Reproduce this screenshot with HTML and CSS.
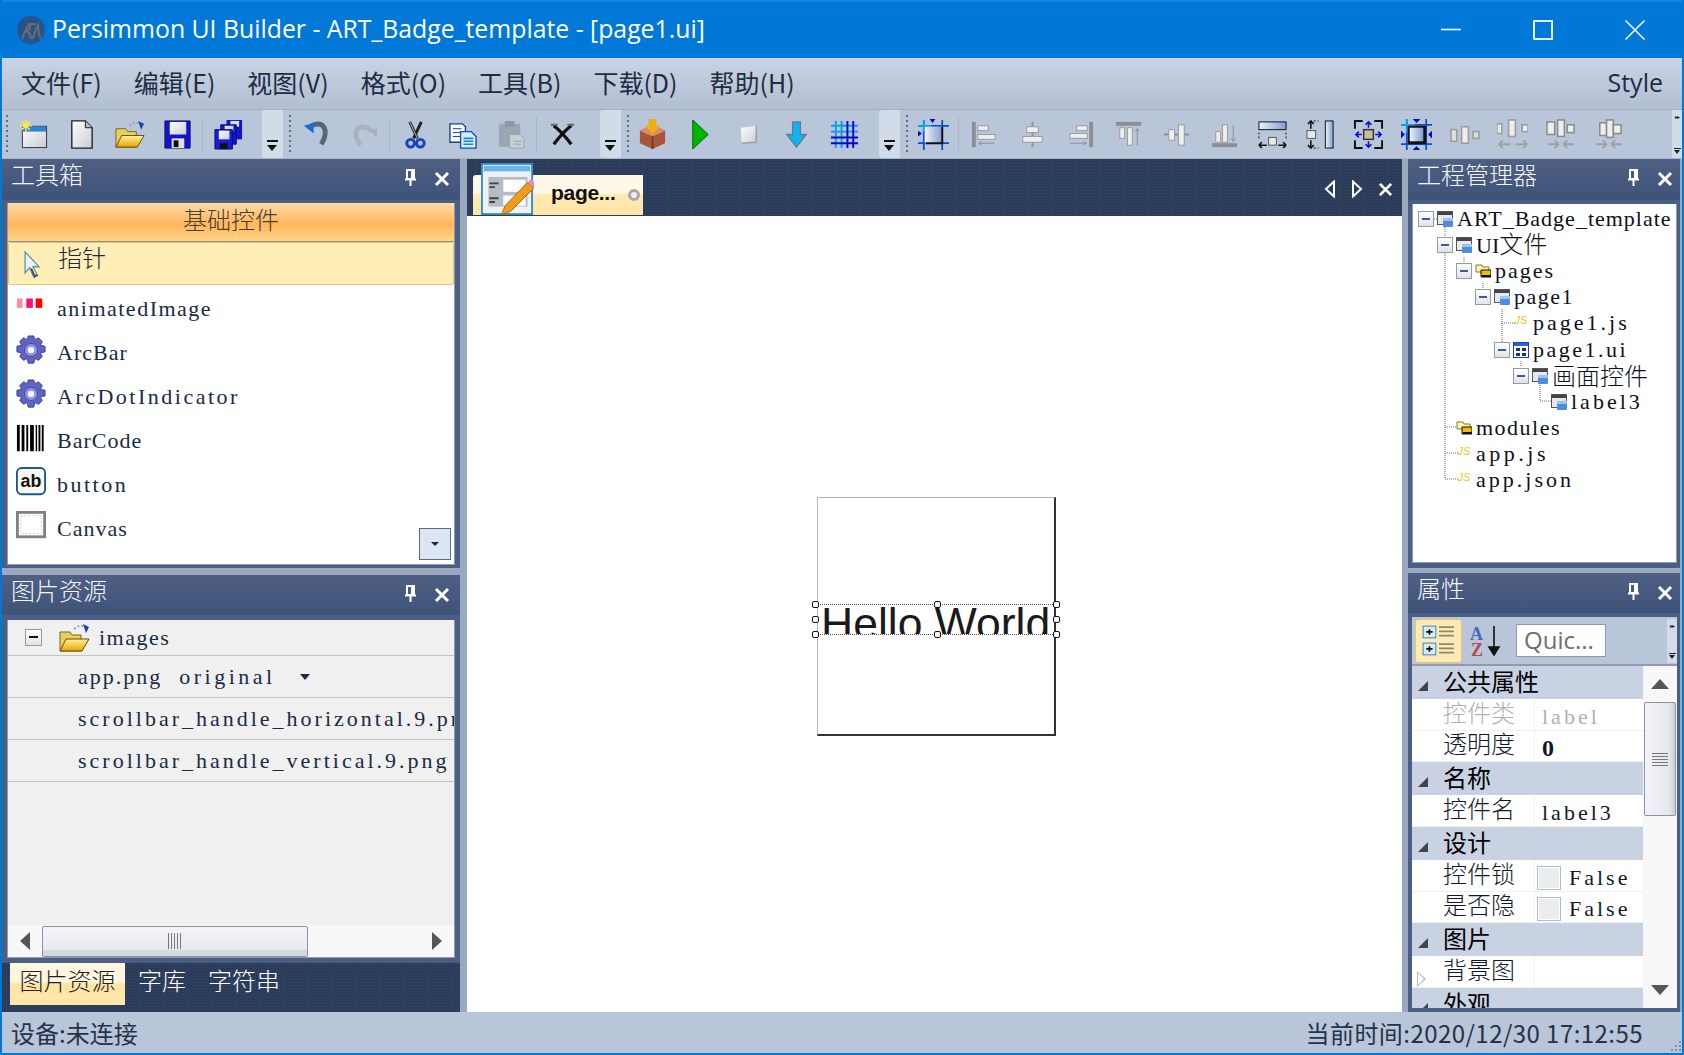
FILE: index.html
```html
<!DOCTYPE html>
<html lang="zh">
<head>
<meta charset="utf-8">
<title>Persimmon UI Builder</title>
<link rel="stylesheet" href="styles.css">
</head>
<body>
<svg class="sprite" xmlns="http://www.w3.org/2000/svg">
<defs>
<linearGradient id="gw" x1="0" y1="0" x2="1" y2="1"><stop offset="0" stop-color="#fff"/><stop offset="1" stop-color="#c8ccd4"/></linearGradient>
<linearGradient id="gb" x1="0" y1="0" x2="1" y2="0"><stop offset="0" stop-color="#eef2f8"/><stop offset="1" stop-color="#7f9fd0"/></linearGradient>
<linearGradient id="gy" x1="0" y1="0" x2="0" y2="1"><stop offset="0" stop-color="#fff3a0"/><stop offset="1" stop-color="#e8a400"/></linearGradient>
</defs>
<symbol id="i-new" viewBox="0 0 32 32"><rect x="4" y="7" width="26" height="23" fill="#333"/><rect x="5" y="8" width="24" height="21" fill="url(#gw)"/><rect x="5" y="8" width="24" height="5" fill="#2b86d8"/><path d="M8 1v12M2 7h12M4 3l8 8M12 3l-8 8" stroke="#ffe84a" stroke-width="1.6"/></symbol>
<symbol id="i-doc" viewBox="0 0 32 32"><path d="M6 2h14l7 7v21H6z" fill="url(#gw)" stroke="#222" stroke-width="1.4"/><path d="M20 2v7h7" fill="#bbb" stroke="#222"/></symbol>
<symbol id="i-open" viewBox="0 0 32 32"><path d="M2 10h10l2 3h9v16H2z" fill="#e8d060" stroke="#7a6a10"/><path d="M2 29l6-12h23l-7 12z" fill="url(#gy)" stroke="#6a4a00"/><path d="M16 7q6-5 11-2" fill="none" stroke="#8fa8c0" stroke-width="2" stroke-dasharray="2 2"/><path d="M25 2l6 3-3 6z" fill="#1c3fae"/></symbol>
<symbol id="i-save" viewBox="0 0 32 32"><path d="M3 2h26v28H3z" fill="#1414c8" stroke="#001070"/><rect x="8" y="3" width="17" height="13" fill="url(#gw)"/><rect x="10" y="20" width="13" height="10" fill="#e0e0e0"/><rect x="12" y="22" width="5" height="7" fill="#111"/></symbol>
<symbol id="i-saveall" viewBox="0 0 32 32"><path d="M14 1h16v20H14z" fill="#1414c8"/><rect x="18" y="2" width="9" height="6" fill="#ddd"/><path d="M8 6h16v20H8z" fill="#1414c8" stroke="#001070"/><rect x="12" y="7" width="9" height="6" fill="#ddd"/><path d="M2 11h18v20H2z" fill="#1c1cd8" stroke="#001070"/><rect x="6" y="12" width="11" height="9" fill="url(#gw)"/><rect x="7" y="25" width="8" height="6" fill="#111"/></symbol>
<symbol id="i-undo" viewBox="0 0 32 32"><path d="M9 8q11-6 15 1q3 7-3 17" fill="none" stroke="#55657a" stroke-width="5"/><path d="M3 7l10-3v11z" fill="#1a6fd8"/></symbol>
<symbol id="i-redo" viewBox="0 0 32 32"><path d="M23 12q-10-7-15-1q-3 7 4 16" fill="none" stroke="#a9b3ba" stroke-width="5"/><path d="M29 10l-9 1 9 8z" fill="#a6b2bb"/></symbol>
<symbol id="i-cut" viewBox="0 0 32 32"><path d="M10 3l8 17M22 3l-8 17" stroke="#222" stroke-width="3"/><path d="M10 3l8 17" stroke="#bbb" stroke-width="1"/><circle cx="11" cy="25" r="4" fill="none" stroke="#1440c8" stroke-width="3"/><circle cx="21" cy="25" r="4" fill="none" stroke="#1440c8" stroke-width="3"/></symbol>
<symbol id="i-copy" viewBox="0 0 32 32"><path d="M2 5h13l3 3v16H2z" fill="#fff" stroke="#1a3f90" stroke-width="1.4"/><path d="M5 10h9M5 14h9M5 18h9" stroke="#1a3f90"/><path d="M13 13h11l5 5v12H13z" fill="#d6ecff" stroke="#1050a8" stroke-width="1.4"/><path d="M16 20h10M16 23h10M16 26h10" stroke="#0a8adf" stroke-width="1.6"/></symbol>
<symbol id="i-paste" viewBox="0 0 32 32"><rect x="3" y="5" width="22" height="24" rx="2" fill="#9ba6b3"/><rect x="9" y="2" width="10" height="6" fill="#8d98a6"/><path d="M14 16h11l4 4v10H14z" fill="#c8ced6" stroke="#9aa3ae"/><path d="M18 23h8M18 26h8" stroke="#9aa3ae"/></symbol>
<symbol id="i-del" viewBox="0 0 32 32"><path d="M7 7q8 6 18 19" fill="none" stroke="#111" stroke-width="3.4"/><path d="M25 7q-8 6-18 19" fill="none" stroke="#111" stroke-width="3.4"/><path d="M4 6h7M21 6h7" stroke="#666" stroke-width="2"/></symbol>
<symbol id="i-box" viewBox="0 0 32 32"><path d="M3 12l13-6 13 6v13l-13 6-13-6z" fill="#a8563a"/><path d="M3 12l13 6 13-6-13-6z" fill="#de8a68"/><path d="M16 18v13" stroke="#7a3820" stroke-width="2"/><path d="M12 0h8v7h4l-8 9-8-9h4z" fill="#f0ae10"/></symbol>
<symbol id="i-play" viewBox="0 0 32 32"><path d="M8 1l16 15-16 15z" fill="#00b400" stroke="#006400"/></symbol>
<symbol id="i-stop" viewBox="0 0 32 32"><path d="M8 9l16-2v17l-15 1z" fill="url(#gw)"/><path d="M24 7v17l-15 1" fill="none" stroke="#a0a0a0" stroke-width="1.6"/></symbol>
<symbol id="i-down" viewBox="0 0 32 32"><path d="M12 3h8v13h6L16 29 6 16h6z" fill="#0fb4f0" stroke="#607d98" stroke-width="1.4"/></symbol>
<symbol id="i-grid" viewBox="0 0 32 32"><path d="M7 2v28M13 2v28" stroke="#08a0e8" stroke-width="2"/><path d="M2 7h28M2 13h28" stroke="#08a0e8" stroke-width="2"/><path d="M19 2v28M25 2v28M2 19h28M2 25h28" stroke="#0808d0" stroke-width="2"/></symbol>
<symbol id="i-snap" viewBox="0 0 32 32"><path d="M6 1v31M25 1v31M0 7h32M0 25h32" stroke="#0a4fd0" stroke-width="1.8"/><path d="M6 1v12M0 7h14" stroke="#08a8e8" stroke-width="1.8"/><rect x="7" y="8" width="18" height="17" fill="url(#gb)"/><path d="M25 8v17H8" fill="none" stroke="#111" stroke-width="2"/><path d="M12 0h6l-3 4zM0 12l4 3-4 3z" fill="#0808c0"/></symbol>
<symbol id="i-al" viewBox="0 0 32 32"><rect x="3" y="3" width="4" height="26" fill="#8a8f96"/><rect x="9" y="7" width="11" height="5" fill="#eee" stroke="#9a9a9a"/><rect x="9" y="16" width="18" height="5" fill="#eee" stroke="#9a9a9a"/><path d="M10 25h16M10 25l3-2M10 25l3 2" stroke="#8a8f96" fill="none"/></symbol>
<symbol id="i-ac" viewBox="0 0 32 32"><path d="M16 3v26" stroke="#8a8f96" stroke-width="2"/><rect x="10" y="8" width="12" height="6" fill="#eee" stroke="#9a9a9a"/><rect x="6" y="18" width="20" height="6" fill="#eee" stroke="#9a9a9a"/></symbol>
<symbol id="i-ar" viewBox="0 0 32 32"><rect x="25" y="3" width="4" height="26" fill="#8a8f96"/><rect x="12" y="7" width="11" height="5" fill="#eee" stroke="#9a9a9a"/><rect x="5" y="15" width="18" height="5" fill="#eee" stroke="#9a9a9a"/><path d="M5 25h17M22 25l-3-2M22 25l-3 2" stroke="#8a8f96" fill="none"/></symbol>
<symbol id="i-at" viewBox="0 0 32 32"><rect x="3" y="3" width="26" height="4" fill="#8a8f96"/><rect x="7" y="9" width="5" height="11" fill="#eee" stroke="#9a9a9a"/><rect x="15" y="9" width="5" height="18" fill="#eee" stroke="#9a9a9a"/><path d="M25 10v17M25 10l-2 3M25 10l2 3" stroke="#8a8f96" fill="none"/></symbol>
<symbol id="i-am" viewBox="0 0 32 32"><path d="M3 16h26" stroke="#8a8f96" stroke-width="2"/><rect x="8" y="11" width="6" height="11" fill="#eee" stroke="#9a9a9a"/><rect x="18" y="6" width="6" height="21" fill="#eee" stroke="#9a9a9a"/></symbol>
<symbol id="i-ab" viewBox="0 0 32 32"><rect x="3" y="25" width="26" height="4" fill="#8a8f96"/><rect x="7" y="13" width="5" height="11" fill="#eee" stroke="#9a9a9a"/><rect x="14" y="6" width="5" height="18" fill="#eee" stroke="#9a9a9a"/><path d="M25 7v16M25 23l-2-3M25 23l2-3" stroke="#8a8f96" fill="none"/></symbol>
<symbol id="i-sw" viewBox="0 0 32 32"><rect x="2" y="3" width="28" height="8" fill="url(#gb)" stroke="#111"/><path d="M2 14v8M30 14v8" stroke="#111" stroke-dasharray="2 2"/><rect x="12" y="19" width="8" height="8" fill="#e8e8e8" stroke="#555"/><path d="M2 27h8M2 27l3-3M2 27l3 3M22 27h8M30 27l-3-3M30 27l-3 3" stroke="#111" stroke-width="1.6" fill="none"/></symbol>
<symbol id="i-sh" viewBox="0 0 32 32"><rect x="21" y="2" width="8" height="28" fill="url(#gb)" stroke="#111"/><path d="M5 2h9M5 30h9" stroke="#111" stroke-dasharray="2 2"/><rect x="2" y="12" width="9" height="8" fill="#e8e8e8" stroke="#555"/><path d="M6 2v8M6 2l-3 3M6 2l3 3M6 22v8M6 30l-3-3M6 30l3-3" stroke="#111" stroke-width="1.6" fill="none"/></symbol>
<symbol id="i-center" viewBox="0 0 32 32"><path d="M10 2H2v8M22 2h8v8M2 22v8h8M30 22v8h-8" fill="none" stroke="#111" stroke-width="2"/><rect x="11" y="11" width="10" height="10" fill="#cbbf9f" stroke="#333" stroke-width="1.5"/><path d="M16 3v6M16 23v6M3 16h6M23 16h6M13 6l3-3 3 3M13 26l3 3 3-3M6 13l-3 3 3 3M26 13l3 3-3 3" stroke="#0c0cd0" stroke-width="1.6" fill="none"/></symbol>
<symbol id="i-fit" viewBox="0 0 32 32"><path d="M6 0v32M26 0v32M0 6h32M0 26h32" stroke="#0a4fd0" stroke-width="1.8"/><path d="M6 0v14M0 6h14" stroke="#08a8e8" stroke-width="1.8"/><rect x="7" y="7" width="19" height="19" fill="#111"/><rect x="9" y="9" width="14" height="14" fill="url(#gb)"/><path d="M12 0h8l-4 4zM12 32h8l-4-4zM0 12v8l4-4zM32 12v8l-4-4z" fill="#0808c0"/></symbol>
<symbol id="i-hs" viewBox="0 0 32 32"><rect x="2" y="11" width="6" height="12" fill="#e0e0e0" stroke="#9c9c9c" stroke-width="1.6"/><rect x="13" y="8" width="7" height="17" fill="#eee" stroke="#9c9c9c" stroke-width="1.6"/><rect x="25" y="13" width="6" height="7" fill="#ddd" stroke="#9c9c9c" stroke-width="1.6"/></symbol>
<symbol id="i-hs2" viewBox="0 0 32 32"><rect x="0" y="5" width="5" height="10" fill="#eee" stroke="#9c9c9c" stroke-width="1.6"/><rect x="12" y="1" width="7" height="17" fill="#eee" stroke="#9c9c9c" stroke-width="1.6"/><rect x="26" y="6" width="6" height="7" fill="#eee" stroke="#9c9c9c" stroke-width="1.6"/><path d="M2 26h12M2 26l4-4M2 26l4 4M19 26h12M31 26l-4-4M31 26l-4 4" stroke="#9aa2aa" stroke-width="2" fill="none"/></symbol>
<symbol id="i-hs3" viewBox="0 0 32 32"><rect x="2" y="3" width="8" height="13" fill="#eee" stroke="#8c8c8c" stroke-width="1.6"/><rect x="13" y="1" width="7" height="17" fill="#eee" stroke="#8c8c8c" stroke-width="1.6"/><rect x="23" y="6" width="7" height="8" fill="#eee" stroke="#8c8c8c" stroke-width="1.6"/><path d="M3 26h11M14 26l-4-4M14 26l-4 4M19 26h11M19 26l4-4M19 26l4 4" stroke="#9aa2aa" stroke-width="2" fill="none"/></symbol>
<symbol id="i-hs4" viewBox="0 0 32 32"><rect x="7" y="4" width="7" height="13" fill="#eee" stroke="#8c8c8c" stroke-width="1.6"/><rect x="14" y="1" width="7" height="18" fill="#eee" stroke="#8c8c8c" stroke-width="1.6"/><rect x="21" y="6" width="8" height="9" fill="#eee" stroke="#8c8c8c" stroke-width="1.6"/><path d="M3 26h11M14 26l-4-4M14 26l-4 4M19 26h11M19 26l4-4M19 26l4 4" stroke="#9aa2aa" stroke-width="2" fill="none"/></symbol>
<symbol id="i-pin" viewBox="0 0 12 18"><path d="M3 1h7v9H3zM1 10.500h11M6.500 10v7" fill="none" stroke="#fff" stroke-width="2"/><path d="M8 1v9" stroke="#fff" stroke-width="2"/></symbol>
<symbol id="i-x" viewBox="0 0 16 16"><path d="M2 2l12 12M14 2L2 14" stroke="#fff" stroke-width="3"/></symbol>
<symbol id="i-gear" viewBox="0 0 32 32"><path d="M13 1h6l1 4 4-2 4 4-2 4 5 1v6l-5 1 2 4-4 4-4-2-1 5h-6l-1-5-4 2-4-4 2-4-5-1v-6l5-1-2-4 4-4 4 2z" fill="#5f63c4" stroke="#3c3f96"/><circle cx="16" cy="16" r="7" fill="#8d92e0" stroke="#44479c"/><circle cx="16" cy="16" r="3.500" fill="#f4f4ff"/></symbol>
<symbol id="i-win" viewBox="0 0 16 16"><rect x=".5" y=".5" width="15" height="13" fill="#e6e8ec" stroke="#555"/><rect x="1" y="1" width="14" height="3" fill="#444"/><rect x="6" y="7" width="10" height="9" rx="1" fill="#4f8edc"/><rect x="6" y="7" width="10" height="3" fill="#9cc4f0"/></symbol>
<symbol id="i-fold" viewBox="0 0 16 14"><path d="M1 1h6l1 2h6v5H1z" fill="#fff3b0" stroke="#8a7a30"/><path d="M6 6h10v7H6z" fill="#f0bd10" stroke="#111"/><path d="M7 12h9" stroke="#111" stroke-width="2"/></symbol>
<symbol id="i-grid16" viewBox="0 0 16 16"><rect x=".5" y=".5" width="15" height="15" fill="#fff" stroke="#1a3fb0"/><rect x="1" y="1" width="14" height="3" fill="#2f5fe0"/><path d="M3 6h4v3H3zM9 6h4v3H9zM3 11h4v3H3zM9 11h4v3H9z" fill="#16366e"/></symbol>
</svg>

<div class="app">
  <header class="titlebar">
    <svg class="logo" viewBox="0 0 28 30"><circle cx="14" cy="15" r="14" fill="#23548f"/><path d="M5 24q4-10 7-15h7M13 9q1 6-3 7 3 2 4 8M16 24q2-9 5-14 0 8 3 14" fill="none" stroke="#6f6a62" stroke-width="2.200"/></svg>
    <div class="titletext">Persimmon UI Builder - ART_Badge_template - [page1.ui]</div>
    <div class="winctl">
      <svg class="wc" viewBox="0 0 20 20"><path d="M0 9.500h20" stroke="#fff" stroke-width="1.600"/></svg>
      <svg class="wc" viewBox="0 0 20 20"><rect x="1" y="1" width="18" height="18" fill="none" stroke="#fff" stroke-width="1.800"/></svg>
      <svg class="wc" viewBox="0 0 20 20"><path d="M.5.5l19 19M19.500.5l-19 19" stroke="#fff" stroke-width="1.500"/></svg>
    </div>
  </header>

  <nav class="menubar">
    <span>文件(F)</span><span>编辑(E)</span><span>视图(V)</span><span>格式(O)</span><span>工具(B)</span><span>下载(D)</span><span>帮助(H)</span>
    <span class="menu-right">Style</span>
  </nav>

  <div class="toolbar">
    <div class="tgroup g1">
      <i class="grip"></i>
      <b class="tb"><svg><use href="#i-new"/></svg></b>
      <b class="tb"><svg><use href="#i-doc"/></svg></b>
      <b class="tb"><svg><use href="#i-open"/></svg></b>
      <b class="tb"><svg><use href="#i-save"/></svg></b>
      <i class="tsep"></i>
      <b class="tb"><svg><use href="#i-saveall"/></svg></b>
      <span class="chev"><i></i></span>
    </div>
    <div class="tgroup g2">
      <i class="grip"></i>
      <b class="tb"><svg><use href="#i-undo"/></svg></b>
      <b class="tb"><svg><use href="#i-redo"/></svg></b>
      <i class="tsep"></i>
      <b class="tb"><svg><use href="#i-cut"/></svg></b>
      <b class="tb"><svg><use href="#i-copy"/></svg></b>
      <b class="tb"><svg><use href="#i-paste"/></svg></b>
      <i class="tsep"></i>
      <b class="tb"><svg><use href="#i-del"/></svg></b>
      <span class="chev"><i></i></span>
    </div>
    <div class="tgroup g3">
      <i class="grip"></i>
      <b class="tb"><svg><use href="#i-box"/></svg></b>
      <b class="tb"><svg><use href="#i-play"/></svg></b>
      <b class="tb"><svg><use href="#i-stop"/></svg></b>
      <b class="tb"><svg><use href="#i-down"/></svg></b>
      <b class="tb"><svg><use href="#i-grid"/></svg></b>
      <span class="chev"><i></i></span>
    </div>
    <div class="tgroup g4">
      <i class="grip"></i>
      <b class="tb"><svg><use href="#i-snap"/></svg></b>
      <i class="tsep"></i>
      <b class="tb"><svg><use href="#i-al"/></svg></b>
      <b class="tb"><svg><use href="#i-ac"/></svg></b>
      <b class="tb"><svg><use href="#i-ar"/></svg></b>
      <b class="tb"><svg><use href="#i-at"/></svg></b>
      <b class="tb"><svg><use href="#i-am"/></svg></b>
      <b class="tb"><svg><use href="#i-ab"/></svg></b>
      <b class="tb"><svg><use href="#i-sw"/></svg></b>
      <b class="tb"><svg><use href="#i-sh"/></svg></b>
      <b class="tb"><svg><use href="#i-center"/></svg></b>
      <b class="tb"><svg><use href="#i-fit"/></svg></b>
      <b class="tb"><svg><use href="#i-hs"/></svg></b>
      <b class="tb"><svg><use href="#i-hs2"/></svg></b>
      <b class="tb"><svg><use href="#i-hs3"/></svg></b>
      <b class="tb"><svg><use href="#i-hs4"/></svg></b>
      <span class="over"><em>▸▸</em><i></i></span>
    </div>
  </div>

  <main class="main">
    <section class="col col-left">
      <div class="panel p-toolbox">
        <div class="phead"><span>工具箱</span><svg class="pin"><use href="#i-pin"/></svg><svg class="px"><use href="#i-x"/></svg></div>
        <div class="toolbox">
          <div class="tbgroup">基础控件</div>
          <div class="tool selected">
            <svg class="tool-ic" viewBox="0 0 32 32"><path d="M7 1l16 17h-7l5 10-4 2-5-11-5 6z" fill="#eef0ff" stroke="#5a9a9a" stroke-width="1.500"/><path d="M14 20l4 9 3-2" fill="none" stroke="#444" stroke-width="2"/></svg>
            <span class="cjk">指针</span>
          </div>
          <div class="tool">
            <svg class="tool-ic" viewBox="0 0 32 32"><rect x="1" y="8" width="6" height="10" fill="#ff8f9f"/><rect x="11" y="8" width="7" height="10" fill="#ff0f70"/><rect x="21" y="8" width="7" height="10" fill="#ff0000"/></svg>
            <span class="tr-15">animatedImage</span>
          </div>
          <div class="tool"><svg class="tool-ic"><use href="#i-gear"/></svg><span class="tr-10">ArcBar</span></div>
          <div class="tool"><svg class="tool-ic"><use href="#i-gear"/></svg><span class="tr-25">ArcDotIndicator</span></div>
          <div class="tool">
            <svg class="tool-ic" viewBox="0 0 32 32"><path d="M1 2h3v28H1zM6 2h3v28H6zM11 2h2v28h-2zM15 2h4v28h-4zM21 2h1.500v28H21zM24 2h2v28h-2zM27.500 2h2v28h-2z" fill="#000"/></svg>
            <span class="tr-10">BarCode</span>
          </div>
          <div class="tool">
            <svg class="tool-ic" viewBox="0 0 32 32"><rect x="1" y="1" width="30" height="28" rx="5" fill="#f8f8f0" stroke="#1a5a8a" stroke-width="2"/><text class="ab-text" x="16" y="21" text-anchor="middle">ab</text></svg>
            <span class="tr-25">button</span>
          </div>
          <div class="tool">
            <svg class="tool-ic" viewBox="0 0 32 32"><rect x="1.500" y="1.500" width="29" height="26" fill="#fff" stroke="#808080" stroke-width="3"/><rect x="5" y="5" width="22" height="19" fill="none" stroke="#ccc" stroke-dasharray="2 2"/></svg>
            <span class="tr-10">Canvas</span>
          </div>
          <div class="tool tool-clip">
            <svg class="tool-ic" viewBox="0 0 32 32"><rect x="1" y="1" width="30" height="27" rx="2" fill="#dfe8f4"/><rect x="4" y="5" width="24" height="5" fill="#5d9cf0"/></svg>
          </div>
          <button class="tbdrop"><i></i></button>
        </div>
      </div>
      <div class="panel p-images">
        <div class="phead"><span>图片资源</span><svg class="pin"><use href="#i-pin"/></svg><svg class="px"><use href="#i-x"/></svg></div>
        <div class="imagelist">
          <div class="imgrows">
            <div class="imgrow head"><span class="expander big"></span><svg class="folder"><use href="#i-open"/></svg><span class="tr-15">images</span></div>
            <div class="imgrow"><span class="tr-20">app.png</span><span class="orig tr-35">original</span><i class="caret"></i></div>
            <div class="imgrow"><span class="tr-30">scrollbar_handle_horizontal.9.png</span></div>
            <div class="imgrow"><span class="tr-30">scrollbar_handle_vertical.9.png</span></div>
          </div>
          <div class="hscroll">
            <i class="arr-l"></i>
            <div class="hthumb"><i></i></div>
            <i class="arr-r"></i>
          </div>
        </div>
        <div class="btabs">
          <span class="btab active">图片资源</span><span class="btab">字库</span><span class="btab">字符串</span>
        </div>
      </div>
    </section>

    <section class="center">
      <div class="tabstrip">
        <div class="doctab">
          <svg class="docicon" viewBox="0 0 56 56"><rect x="1" y="1" width="54" height="54" fill="#eef2f6" stroke="#2c8ec4" stroke-width="2"/><rect x="3" y="3" width="50" height="6" fill="#6ab4e8"/><rect x="8" y="15" width="42" height="32" fill="#b4bcc4"/><rect x="24" y="18" width="24" height="13" fill="#fff"/><rect x="24" y="35" width="24" height="11" fill="#fff"/><path d="M9 22h10M9 26h6M9 38h10M9 42h6" stroke="#444" stroke-width="2"/><path d="M22 56l4-10 24-25 7 6-25 25z" fill="#f09a20" stroke="#a06010"/><path d="M50 21l4-4 6 6-3 4z" fill="#e090c0"/></svg>
          <span class="doctitle">page...</span>
          <i class="tabclose"></i>
        </div>
        <div class="tabctl">
          <svg viewBox="0 0 12 18"><path d="M10 1.500v15L2 9z" fill="none" stroke="#fff" stroke-width="2"/></svg>
          <svg viewBox="0 0 12 18"><path d="M2 1.500v15L10 9z" fill="none" stroke="#fff" stroke-width="2"/></svg>
          <svg class="tabx"><use href="#i-x"/></svg>
        </div>
      </div>
      <div class="canvas">
        <div class="design">
          <div class="label">
            <span class="hellotext">Hello World</span>
            <i class="h h-tl"></i><i class="h h-tc"></i><i class="h h-tr"></i>
            <i class="h h-ml"></i><i class="h h-mr"></i>
            <i class="h h-bl"></i><i class="h h-bc"></i><i class="h h-br"></i>
          </div>
        </div>
      </div>
    </section>

    <section class="col col-right">
      <div class="panel p-project">
        <div class="phead"><span>工程管理器</span><svg class="pin"><use href="#i-pin"/></svg><svg class="px"><use href="#i-x"/></svg></div>
        <div class="tree">
          <svg class="treelines"><path d="M32 23v10M32 49v226M32 223h11M32 249h14M32 275h14M51 53v7M70 79v5M89 105v35M89 119h14M108 157v5M127 179v18M127 197h11M21 15h3"/></svg>
          <div class="node d0"><span class="expander"></span><svg class="n-ic"><use href="#i-win"/></svg><span class="tr-10">ART_Badge_template</span></div>
          <div class="node d1"><span class="expander"></span><svg class="n-ic"><use href="#i-win"/></svg><span class="lift">UI<span class="cjk">文件</span></span></div>
          <div class="node d2"><span class="expander"></span><svg class="n-ic"><use href="#i-fold"/></svg><span class="tr-20">pages</span></div>
          <div class="node d3"><span class="expander"></span><svg class="n-ic"><use href="#i-win"/></svg><span class="tr-15">page1</span></div>
          <div class="node d4"><span class="nospace"></span><span class="js">JS</span><span class="tr-30">page1.js</span></div>
          <div class="node d4"><span class="expander"></span><svg class="n-ic"><use href="#i-grid16"/></svg><span class="tr-25">page1.ui</span></div>
          <div class="node d5"><span class="expander"></span><svg class="n-ic"><use href="#i-win"/></svg><span class="cjk lift">画面控件</span></div>
          <div class="node d6"><span class="nospace"></span><svg class="n-ic"><use href="#i-win"/></svg><span class="tr-30">label3</span></div>
          <div class="node d1"><span class="nospace"></span><svg class="n-ic"><use href="#i-fold"/></svg><span class="tr-15">modules</span></div>
          <div class="node d1"><span class="nospace"></span><span class="js">JS</span><span class="tr-35">app.js</span></div>
          <div class="node d1"><span class="nospace"></span><span class="js">JS</span><span class="tr-30">app.json</span></div>
        </div>
      </div>
      <div class="panel p-props">
        <div class="phead"><span>属性</span><svg class="pin"><use href="#i-pin"/></svg><svg class="px"><use href="#i-x"/></svg></div>
        <div class="ptools">
          <span class="pbtn">
            <svg viewBox="0 0 32 32"><rect x="1" y="2" width="12" height="11" fill="#d8ecf8" stroke="#4a88b8"/><rect x="1" y="18" width="12" height="11" fill="#d8ecf8" stroke="#4a88b8"/><path d="M4 7.500h6M7 5v5M4 23.500h6M7 21v5" stroke="#111" stroke-width="1.600"/><path d="M16 3h14M16 7h14M16 11h14M16 19h14M16 23h14M16 27h14" stroke="#8a8a70" stroke-width="1.600"/></svg>
          </span>
          <svg class="azicon" viewBox="0 0 32 32"><text class="az a" x="0" y="15">A</text><text class="az z" x="1" y="31">Z</text><path d="M24 1v26M19 22l5 8 5-8z" stroke="#111" stroke-width="1.600" fill="#111"/></svg>
          <span class="quick">Quic...</span>
          <span class="over small"><em>▸▸</em><i></i></span>
        </div>
        <div class="props">
          <div class="pgrid">
            <div class="cat"><i class="tri"></i><span>公共属性</span></div>
            <div class="prow disabled"><span class="pname">控件类</span><span class="pval tr-30">label</span></div>
            <div class="prow"><span class="pname">透明度</span><span class="pval strong">0</span></div>
            <div class="cat"><i class="tri"></i><span>名称</span></div>
            <div class="prow"><span class="pname">控件名</span><span class="pval tr-30">label3</span></div>
            <div class="cat"><i class="tri"></i><span>设计</span></div>
            <div class="prow"><span class="pname">控件锁</span><span class="pval tr-30"><i class="chk"></i>False</span></div>
            <div class="prow"><span class="pname">是否隐</span><span class="pval tr-30"><i class="chk"></i>False</span></div>
            <div class="cat"><i class="tri"></i><span>图片</span></div>
            <div class="prow"><i class="tri-open"></i><span class="pname">背景图</span><span class="pval"></span></div>
            <div class="cat last"><i class="tri"></i><span>外观</span></div>
          </div>
          <div class="vscroll">
            <i class="up"></i>
            <div class="vthumb"><i></i></div>
            <i class="dn"></i>
          </div>
        </div>
      </div>
    </section>
  </main>

  <footer class="status">
    <span>设备:未连接</span>
    <span class="time">当前时间:2020/12/30 17:12:55</span>
    <svg class="resize" viewBox="0 0 12 12"><path d="M9 1h2v2H9zM5 5h2v2H5zM9 5h2v2H9zM1 9h2v2H1zM5 9h2v2H5zM9 9h2v2H9z" fill="#7f8da5"/></svg>
  </footer>
</div>
</body>
</html>
```

FILE: styles.css
```css
* { box-sizing: border-box; }
html, body { margin: 0; padding: 0; }
body { width: 1684px; height: 1055px; overflow: hidden; background: #0078d7; font-family: "Noto Sans CJK SC", "Noto Sans", sans-serif; }
.sprite { position: absolute; width: 0; height: 0; overflow: hidden; }
.app { width: 1684px; height: 1055px; border: 2px solid #0078d7; border-top: 0; display: flex; flex-direction: column; }

/* tracking classes: the widely spaced latin of the reference */
.tr-10 { letter-spacing: 1px; }
.tr-15 { letter-spacing: 1.5px; }
.tr-20 { letter-spacing: 2px; }
.tr-25 { letter-spacing: 2.5px; }
.tr-30 { letter-spacing: 3px; }
.tr-35 { letter-spacing: 3.5px; }

/* title */
.titlebar { flex: 0 0 58px; background: #0078d7; display: flex; align-items: center; color: #fff; border-top: 2px solid #1685dd; }
.logo { width: 28px; height: 30px; margin-left: 15px; }
.titletext { font-family: "Open Sans", "Noto Sans", sans-serif; font-size: 24.8px; margin-left: 7px; white-space: nowrap; position: relative; top: -2px; }
.winctl { margin-left: auto; display: flex; align-items: center; gap: 72px; margin-right: 37px; }
.wc { width: 20px; height: 20px; display: block; }

/* menu */
.menubar { flex: 0 0 52px; background: linear-gradient(#c9d3e3, #b2bed2); display: flex; align-items: center; gap: 32px; padding: 0 19px 0 19px; font-size: 25px; line-height: 1; color: #1e2c44; white-space: nowrap; border-bottom: 1px solid #a3b0c6; }
.menubar span { position: relative; top: -1px; }
.menubar .menu-right { margin-left: auto; font-family: "Open Sans", sans-serif; font-size: 25px; }

/* toolbar */
.toolbar { flex: 0 0 49px; background: #b9c5d8; display: flex; gap: 4px; padding-left: 2px; border-bottom: 1px solid #a8b5ca; }
.tgroup { display: flex; align-items: center; height: 48px; position: relative; background: #b9c5d8; }
.g1 { flex: 0 0 279px; }
.g2 { flex: 0 0 334px; }
.g3 { flex: 0 0 275px; }
.g4 { flex: 1; }
.grip { width: 2px; height: 38px; margin: 0 1px 0 2px; flex: none; background: repeating-linear-gradient(#5e6c84 0 2px, transparent 2px 5px); }
.g3 .grip { margin-right: 0; }
.g3 .tb:first-of-type { margin-left: -1px; }
.tb { width: 48px; height: 48px; flex: none; display: flex; align-items: center; justify-content: center; }
.tb svg { width: 31px; height: 31px; display: block; }
.tsep { width: 1px; height: 34px; margin: 0 1px; background: #a9b6ca; flex: none; }
.chev { margin-left: auto; width: 21px; height: 48px; background: #d2dbe8; border-radius: 3px 0 0 3px; display: flex; align-items: flex-end; justify-content: center; padding-bottom: 8px; flex: none; position: relative; }
.chev i { display: block; width: 11px; height: 10px; border-top: 2px solid #111; position: relative; }
.chev i::after { content: ""; position: absolute; left: 0; top: 3px; border: 5.5px solid transparent; border-top: 6px solid #111; border-bottom: 0; }
.over { margin-left: auto; width: 10px; height: 48px; background: #d2dbe8; display: flex; flex-direction: column; align-items: center; justify-content: space-between; padding: 3px 0 4px; flex: none; }
.over em { font-style: normal; font-size: 6px; line-height: 8px; color: #222; letter-spacing: -1px; }
.over i { display: block; width: 7px; height: 6px; border-top: 1px solid #222; position: relative; }
.over i::after { content: ""; position: absolute; left: 0; top: 1px; border: 3.5px solid transparent; border-top: 4px solid #222; border-bottom: 0; }

/* main */
.main { flex: 1; display: flex; background: #9aa9c0; min-height: 0; padding-right: 2px; }
.col { display: flex; flex-direction: column; flex: none; min-height: 0; }
.col-left { width: 458px; }
.col-right { width: 272px; margin-left: 6px; }
.panel { background: #4b5e83; display: flex; flex-direction: column; padding: 0 5px; min-height: 0; }
.p-toolbox { flex: 0 0 409px; padding-bottom: 3px; }
.p-images { flex: 1; margin-top: 7px; padding: 0; }
.p-project { flex: 0 0 409px; padding-bottom: 5px; }
.p-props { flex: 1; margin-top: 5px; padding-bottom: 4px; }
.phead { flex: 0 0 41px; margin: 0 -5px 3px; padding: 0 10px 11px 9px; background: linear-gradient(#4e6083, #3f5279); color: #f4f6fa; font-size: 24px; font-weight: 300; display: flex; align-items: center; line-height: 1; }
.p-images .phead { margin: 0 0 5px; flex-basis: 40px; }
.p-props .phead { margin-bottom: 4px; flex-basis: 40px; }
.p-project .phead { margin-bottom: 4px; }
.col-right .phead { padding-right: 7px; }
.phead span { flex: 1; }
.pin { width: 12px; height: 18px; margin: 8px 18px 0 0; }
.px { width: 16px; height: 16px; margin-top: 10px; }

/* toolbox */
.toolbox { flex: 1; min-height: 0; background: #fff; position: relative; overflow: hidden; font-family: "Liberation Serif", "Noto Sans CJK SC", serif; font-size: 22px; color: #1a2a44; border: 1px solid #8f9bb0; border-top: 0; }
.tbgroup { height: 39px; padding-bottom: 7px; background: linear-gradient(#ffdba8, #ffb65c 55%, #ffd488); border-bottom: 1px solid #8f8f8f; display: flex; align-items: center; justify-content: center; font-family: "Noto Sans CJK SC", sans-serif; font-size: 24px; font-weight: 300; line-height: 1; color: #4c4030; }
.tool { height: 44px; display: flex; align-items: center; padding-left: 8px; gap: 11px; white-space: nowrap; flex: none; }
.tool.selected { height: 43px; margin-bottom: 1px; background: #ffeeb5; border: 1px solid #e6c676; border-radius: 2px; padding-left: 8px; font-family: "Noto Sans CJK SC", sans-serif; padding-bottom: 15px; gap: 11px; line-height: 1; }
.tool span { position: relative; top: 1px; }
.tool-ic { width: 30px; height: 30px; flex: none; position: relative; top: -2px; }
.tool.selected .tool-ic { margin-left: 2px; top: 9px; width: 28px; }
.tool-clip { align-items: flex-start; padding-top: 13px; }
.tool-clip .tool-ic { top: 0; }
.cjk { font-family: "Noto Sans CJK SC", sans-serif; font-size: 24px; font-weight: 300; }
.ab-text { font: 700 19px "Liberation Sans", sans-serif; fill: #111; }
.tbdrop { position: absolute; right: 3px; bottom: 4px; width: 32px; height: 32px; padding: 0; background: #dce6f3; border: 1px solid #5d6c85; display: flex; align-items: center; justify-content: center; }
.tbdrop i { width: 0; height: 0; border: 4px solid transparent; border-top: 4px solid #1a2a44; border-bottom: 0; display: block; }

/* images */
.imagelist { flex: 0 0 338px; margin: 0 5px; background: #f0f0f0; display: flex; flex-direction: column; overflow: hidden; font-family: "Liberation Serif", serif; font-size: 22px; color: #1a2a44; border: 1px solid #8f9bb0; border-top: 0; }
.imgrows { flex: 1; min-height: 0; }
.imgrow { height: 42px; border-bottom: 1px solid #c4c4c4; display: flex; align-items: center; padding-left: 70px; white-space: nowrap; overflow: hidden; }
.imgrow.head { height: 36px; padding-left: 17px; }
.expander { width: 16px; height: 16px; border: 1px solid #9a9a9a; background: linear-gradient(#fff, #dfe3ea); position: relative; flex: none; display: block; }
.expander::after { content: ""; position: absolute; left: 3px; right: 3px; top: 6px; height: 2px; background: #3d5aa0; }
.expander.big { width: 17px; height: 17px; }
.expander.big::after { background: #111; }
.folder { width: 32px; height: 32px; margin: 0 9px 0 16px; flex: none; }
.orig { margin-left: 17px; }
.caret { width: 0; height: 0; border: 5.5px solid transparent; border-top: 6px solid #1a2a44; border-bottom: 0; margin-left: 24px; }
.hscroll { flex: 0 0 32px; background: #f8f8f8; display: flex; align-items: center; padding: 0 12px; }
.arr-l { width: 0; height: 0; border: 9px solid transparent; border-right: 10px solid #555; border-left: 0; flex: none; }
.arr-r { width: 0; height: 0; border: 9px solid transparent; border-left: 10px solid #555; border-right: 0; flex: none; margin-left: auto; }
.hthumb { width: 266px; height: 31px; margin-left: 12px; background: linear-gradient(#f2f4f8, #e6e9ef 80%, #d5d9e0 80%); border: 1px solid #8a93a6; border-radius: 2px; display: flex; align-items: center; justify-content: center; }
.hthumb i { width: 15px; height: 16px; display: block; background: repeating-linear-gradient(90deg, #777 0 1px, transparent 1px 3px); }
.btabs { flex: 1; min-height: 0; margin-top: 5px; display: flex; align-items: flex-start; gap: 13px; padding-left: 8px; color: #fff; font-size: 24px; font-weight: 300; line-height: 34px; background-color: #2b3b5a; background-image: radial-gradient(#3a4a68 1px, transparent 1px); background-size: 3px 3px; }
.btab { height: 42px; }
.btab:nth-child(3) { margin-left: 9px; }
.btab.active { width: 115px; text-align: center; background: linear-gradient(#fff6df 45%, #ffe5a2 50%, #ffe7ad); color: #222; }

/* center */
.center { flex: 0 0 935px; margin-left: 7px; display: flex; flex-direction: column; }
.tabstrip { flex: 0 0 57px; display: flex; align-items: flex-end; padding: 0 9px 1px 6px; background-color: #2b3b5a; background-image: radial-gradient(#3a4a68 1px, transparent 1px); background-size: 3px 3px; }
.doctab { width: 170px; height: 40px; background: linear-gradient(#fff8e6 45%, #ffe9b3 50%, #ffe5a8); display: flex; align-items: center; position: relative; padding: 0 0 5px 78px; border-radius: 3px 0 0 0; }
.docicon { position: absolute; left: 7px; bottom: 0; width: 54px; height: 52px; }
.doctitle { font: 700 21px "Liberation Sans", sans-serif; color: #111; letter-spacing: -.3px; }
.tabclose { position: absolute; right: 3px; top: 14px; width: 12px; height: 12px; border-radius: 50%; background: #eee; border: 3px solid #a9a9a9; }
.tabctl { margin-left: auto; display: flex; align-items: center; gap: 15px; align-self: center; padding-top: 4px; }
.tabctl svg { width: 12px; height: 18px; }
.tabctl .tabx { width: 15px; height: 15px; }
.canvas { flex: 1; background: #fff; display: flex; align-items: center; justify-content: center; padding: 5px 0 0 4px; }
.design { width: 239px; height: 239px; border: 1px solid #b5b5b5; border-right: 2px solid #333; border-bottom: 2px solid #333; position: relative; }
.label { position: absolute; left: -3px; right: -3px; top: 106px; height: 31px; border-top: 1px dotted #555; border-bottom: 1px dotted #555; }
.hellotext { display: block; height: 29px; overflow: hidden; padding-left: 6px; font: 44.5px/38px "Liberation Sans", sans-serif; color: #1a1a1a; white-space: nowrap; }
.h { position: absolute; width: 7px; height: 7px; background: #fff; border: 1px solid #111; border-radius: 2px; }
.h-tl, .h-ml, .h-bl { left: -3px; }
.h-tr, .h-mr, .h-br { right: -3px; }
.h-tc, .h-bc { left: 119px; }
.h-tl, .h-tc, .h-tr { top: -4px; }
.h-ml, .h-mr { top: 11px; }
.h-bl, .h-bc, .h-br { bottom: -4px; }

/* tree */
.tree { flex: 1; min-height: 0; background: #fff; padding-top: 2px; position: relative; font-family: "Liberation Serif", serif; font-size: 22px; line-height: 1; color: #0c1020; border: 1px solid #8f9bb0; border-top: 0; overflow: hidden; margin: 0 -2px 0 -1px; }
.treelines { position: absolute; left: 0; top: 0; width: 100%; height: 100%; }
.treelines path { fill: none; stroke: #666; stroke-width: 1; stroke-dasharray: 1 1; }
.node { height: 26.1px; display: flex; align-items: center; white-space: nowrap; position: relative; }
.d0 { padding-left: 5px; } .d1 { padding-left: 24px; } .d2 { padding-left: 43px; } .d3 { padding-left: 62px; } .d4 { padding-left: 81px; } .d5 { padding-left: 100px; } .d6 { padding-left: 119px; }
.nospace { width: 16px; flex: none; }
.n-ic { width: 16px; height: 16px; margin: 0 4px 0 3px; flex: none; }
.js { width: 16px; margin: 0 4px 0 3px; font: italic 11px "Liberation Sans", sans-serif; color: #f5c518; text-align: center; position: relative; top: -3px; flex: none; }
.lift { position: relative; top: -1px; line-height: 1; }

/* props */
.ptools { flex: 0 0 49px; margin: 0 -2px 0 -1px; background: #b9c5d8; display: flex; align-items: center; padding-left: 3px; border-bottom: 2px solid #8f9bb0; }
.pbtn { width: 47px; height: 44px; background: #ffe9b4; border: 1px solid #e6c676; border-radius: 3px; display: flex; align-items: center; justify-content: center; flex: none; }
.pbtn svg { width: 34px; height: 34px; }
.azicon { width: 32px; height: 32px; margin-left: 8px; flex: none; }
.az { font: 700 18px "Liberation Serif", serif; }
.az.a { fill: #4a68c0; }
.az.z { fill: #b44a4a; }
.quick { width: 90px; height: 33px; margin-left: 14px; background: #fff; border: 1px solid #8a99b5; font: 24px/30px "Open Sans", sans-serif; color: #6e6e6e; padding-left: 7px; white-space: nowrap; overflow: hidden; flex: none; }
.over.small { height: 44px; }
.props { flex: 1; min-height: 0; margin: 0 -2px 0 -1px; background: #fff; display: flex; overflow: hidden; }
.pgrid { flex: 0 0 231px; overflow: hidden; font-family: "Liberation Serif", serif; font-size: 22px; }
.cat { height: 33px; background: #c8d2e2; display: flex; align-items: center; padding-left: 6px; font-family: "Noto Sans CJK SC", sans-serif; font-size: 24px; line-height: 1; color: #000; white-space: nowrap; margin-bottom: 1px; }
.cat span { position: relative; top: -2px; }
.tri { width: 0; height: 0; border-style: solid; border-width: 0 0 10px 10px; border-color: transparent transparent #444 transparent; margin: 6px 15px 0 0; flex: none; }
.prow { height: 31px; display: flex; align-items: center; position: relative; border-bottom: 1px solid #f0f0f0; color: #10182a; }
.pname { flex: 0 0 123px; height: 30px; padding-left: 31px; font-family: "Noto Sans CJK SC", sans-serif; font-size: 24px; font-weight: 300; line-height: 24px; border-right: 1px solid #f0f0f0; white-space: nowrap; }
.pval { padding-left: 7px; display: flex; align-items: center; white-space: nowrap; position: relative; top: 2px; }
.pval.strong { font-weight: 700; font-size: 24px; }
.disabled { color: #b0b0b0; }
.chk { width: 24px; height: 24px; margin: 0 8px 0 -5px; border: 1px solid #a9bedd; background: #ececec; box-shadow: inset 0 0 0 1px #fff; display: block; }
.tri-open { position: absolute; left: 5px; top: 14px; width: 0; height: 0; border: 8px solid transparent; border-left: 9px solid #bbb; border-right: 0; }
.tri-open::after { content: ""; position: absolute; left: -8px; top: -6px; border: 6px solid transparent; border-left: 6.5px solid #fff; border-right: 0; }
.cat.last { margin: 0; }
.vscroll { flex: 1; background: #f7f7f7; display: flex; flex-direction: column; align-items: center; padding-top: 13px; position: relative; }
.up { width: 0; height: 0; border: 9px solid transparent; border-bottom: 10px solid #555; border-top: 0; flex: none; }
.dn { width: 0; height: 0; border: 9px solid transparent; border-top: 10px solid #555; border-bottom: 0; flex: none; margin-top: auto; margin-bottom: 13px; }
.vthumb { width: 32px; height: 114px; margin-top: 13px; background: linear-gradient(90deg, #f2f4f8, #e4e7ed 80%, #c9ced6); border: 1px solid #8a93a6; border-radius: 2px; display: flex; align-items: center; justify-content: center; }
.vthumb i { width: 16px; height: 13px; display: block; background: repeating-linear-gradient(#777 0 1px, transparent 1px 3px); }

/* status */
.status { flex: 0 0 41px; background: #b9c5d8; display: flex; align-items: center; justify-content: space-between; padding: 0 39px 0 9px; font-size: 24px; color: #25324a; line-height: 1; position: relative; white-space: nowrap; }
.time { letter-spacing: .45px; }
.resize { position: absolute; right: 0; bottom: 1px; width: 12px; height: 12px; }
```
